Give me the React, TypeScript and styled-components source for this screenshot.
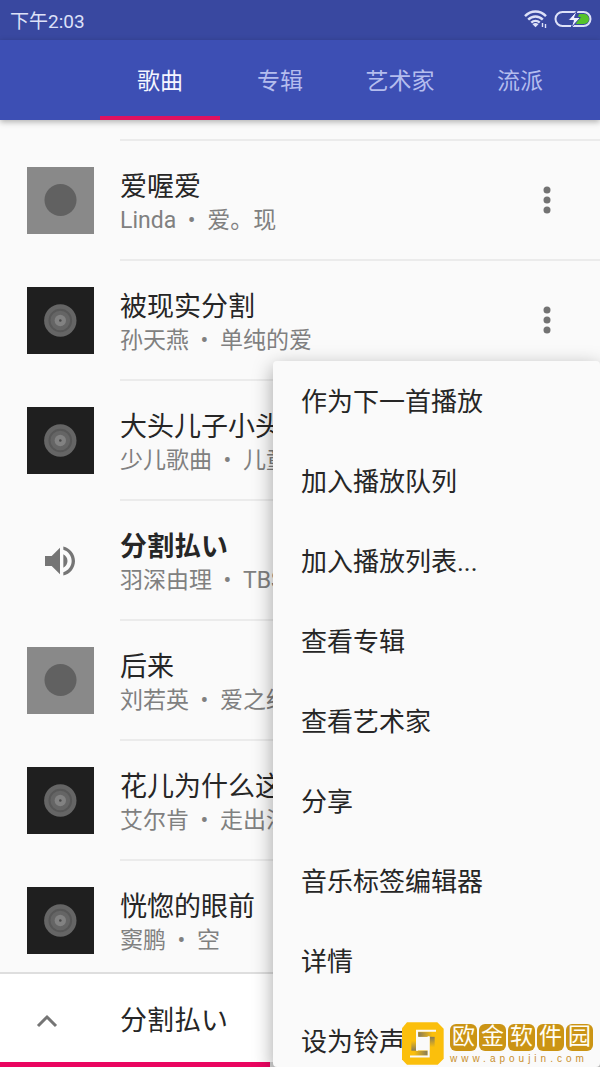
import React from "react";
import styled, { createGlobalStyle } from "styled-components";

const GlobalStyle = createGlobalStyle`
  * { box-sizing: border-box; }
  body {
    margin: 0;
    background: #fafafa;
    font-family: Roboto, "Noto Sans CJK SC", sans-serif;
    color: #262626;
  }
  button {
    font: inherit;
    color: inherit;
    background: none;
    border: 0;
    padding: 0;
    cursor: pointer;
  }
`;

const Screen = styled.div`
  position: relative;
  display: flex;
  flex-direction: column;
  height: 100vh;
  overflow: hidden;
`;

const StatusBar = styled.div`
  flex: none;
  display: flex;
  align-items: center;
  justify-content: space-between;
  height: 40px;
  padding: 0 8px 2px 10px;
  background: #3948a0;
  color: #dde1f8;
  font-size: 19px;
`;

const StatusIcons = styled.div`
  display: flex;
  align-items: center;
  gap: 6px;
`;

const Tabs = styled.nav`
  flex: none;
  position: relative;
  z-index: 1;
  display: flex;
  height: 80px;
  padding-left: 100px;
  background: #3d4fb4;
  box-shadow: 0 2px 6px rgba(0, 0, 0, 0.3);
`;

const Tab = styled.button<{ $active?: boolean }>`
  width: 120px;
  padding-top: 8px;
  font-size: 23px;
  line-height: 32px;
  color: ${(p) => (p.$active ? "#f4f5ff" : "#b4bdee")};
  border-bottom: 4px solid ${(p) => (p.$active ? "#e0115f" : "transparent")};
`;

const List = styled.ul`
  flex: 1;
  min-height: 0;
  margin: 0;
  padding: 19px 0 0;
  list-style: none;
  overflow: hidden;
`;

const Row = styled.li`
  display: flex;
  height: 120px;
`;

const Artwork = styled.div`
  flex: none;
  display: flex;
  align-items: center;
  justify-content: center;
  width: 120px;
  padding-top: 3px;
`;

const RowBody = styled.div`
  flex: 1;
  min-width: 0;
  display: flex;
  align-items: center;
  border-top: 2px solid #ebebeb;
`;

const SongText = styled.div`
  flex: 1;
  min-width: 0;
  padding-top: 6px;
  white-space: nowrap;
  overflow: hidden;
`;

const Title = styled.div<{ $playing?: boolean }>`
  font-size: 27px;
  line-height: 36px;
  font-weight: ${(p) => (p.$playing ? 700 : 400)};
`;

const Subtitle = styled.div`
  display: flex;
  font-size: 23px;
  line-height: 32px;
  color: #808080;
`;

const Dot = styled.span`
  width: 31px;
  text-align: center;
`;

const MoreButton = styled.button`
  display: flex;
  align-items: center;
  justify-content: center;
  width: 107px;
  height: 80px;
`;

const PlayerBar = styled.footer`
  flex: none;
  display: flex;
  flex-direction: column;
  height: 95px;
  background: #ffffff;
  border-top: 2px solid #dedede;
`;

const PlayerContent = styled.div`
  flex: 1;
  display: flex;
  align-items: center;
  padding-top: 6px;
`;

const ExpandButton = styled.button`
  display: flex;
  width: 120px;
  padding-left: 36px;
`;

const Track = styled.div`
  height: 5px;
  background: #d6d6d6;
`;

const Elapsed = styled.div`
  width: 45%;
  height: 100%;
  background: #ea0560;
`;

const Menu = styled.div`
  position: absolute;
  z-index: 2;
  top: 361px;
  right: 0;
  bottom: 0;
  width: 327px;
  overflow: hidden;
  border-radius: 4px;
  background: #fafafa;
  box-shadow: 0 6px 20px rgba(0, 0, 0, 0.36);
`;

const MenuItem = styled.button`
  display: block;
  width: 100%;
  height: 80px;
  padding: 2px 0 0 28px;
  font-size: 26px;
  line-height: 36px;
  text-align: left;
`;

const Watermark = styled.a`
  position: absolute;
  z-index: 3;
  right: 7px;
  bottom: 2px;
  display: flex;
  align-items: center;
  gap: 6px;
  text-decoration: none;
`;

const WatermarkText = styled.div`
  display: flex;
  flex-direction: column;
  gap: 2px;
`;

const Seals = styled.div`
  display: flex;
  gap: 2px;
`;

const Seal = styled.span`
  width: 27px;
  height: 27px;
  border-radius: 6px;
  background: #cb9414;
  color: #fffdf4;
  font-size: 23px;
  line-height: 26px;
  text-align: center;
`;

const Domain = styled.span`
  font-family: "Liberation Sans", sans-serif;
  font-size: 10px;
  line-height: 11px;
  letter-spacing: 4px;
  white-space: nowrap;
  color: #c98f2c;
`;

const WifiIcon = () => (
  <svg width="24" height="20" viewBox="0 0 24 20" fill="none" stroke="#dde1f8" strokeWidth="2.400">
    <path d="M1 7.200C7 1 16 1 22 7.200" />
    <path d="M4.200 10.600c4-4.200 10.600-4.200 14.600 0" />
    <path d="M7.300 13.700c2.400-2.400 6-2.400 8.400 0" />
    <path d="M11.500 18.200l-3-3c1.600-1.600 4.400-1.600 6 0z" fill="#dde1f8" stroke="none" />
    <path d="M18.500 14v4M21.500 15v4" strokeWidth="1.400" />
  </svg>
);

const BatteryIcon = () => (
  <svg width="38" height="18" viewBox="0 0 38 18">
    <rect x="1.500" y="2" width="35" height="14" rx="7" fill="none" stroke="#dde1f8" strokeWidth="2" />
    <path d="M25 4h5a5 5 0 0 1 0 10h-8z" fill="#55c22b" />
    <path d="M23.500 0L14 10.500h5.500L17 18l9.500-10.500h-6z" fill="#eef0ff" stroke="#3948a0" strokeWidth="1" />
  </svg>
);

const PlainDisc = () => (
  <svg width="67" height="67" viewBox="0 0 67 67">
    <rect width="67" height="67" fill="#898989" />
    <circle cx="33.500" cy="33" r="16" fill="#616161" />
  </svg>
);

const VinylDisc = () => (
  <svg width="67" height="67" viewBox="0 0 67 67">
    <rect width="67" height="67" fill="#1f1f1f" />
    <circle cx="33.300" cy="33.500" r="16.200" fill="#656565" />
    <circle cx="33.300" cy="33.500" r="10.800" fill="none" stroke="#575757" strokeWidth="2" />
    <circle cx="33.300" cy="33.500" r="5.700" fill="#828282" />
    <circle cx="33.300" cy="33.500" r="1.300" fill="#4a4a4a" />
  </svg>
);

const SpeakerIcon = () => (
  <svg width="40" height="40" viewBox="0 0 24 24" fill="#757575">
    <path d="M3 9v6h4l5 5V4L7 9H3zm13.500 3c0-1.770-1.020-3.290-2.500-4.030v8.050c1.480-.730 2.500-2.250 2.500-4.020zM14 3.230v2.060c2.890.860 5 3.540 5 6.710s-2.110 5.850-5 6.710v2.060c4.010-.910 7-4.490 7-8.770s-2.990-7.860-7-8.770z" />
  </svg>
);

const MoreIcon = () => (
  <svg width="8" height="28" viewBox="0 0 8 28" fill="#737373">
    <circle cx="4" cy="4" r="3.500" />
    <circle cx="4" cy="14" r="3.500" />
    <circle cx="4" cy="24" r="3.500" />
  </svg>
);

const ChevronUp = () => (
  <svg width="22" height="14" viewBox="0 0 22 14" fill="none" stroke="#757575" strokeWidth="3">
    <path d="M2 12l9-9 9 9" />
  </svg>
);

const SiteLogo = () => (
  <svg width="42" height="43" viewBox="0 0 126 128">
    <defs>
      <linearGradient id="fadeRight" x1="0" x2="1" y1="0" y2="0">
        <stop offset="0" stopColor="#857a5a" />
        <stop offset="0.8" stopColor="#fbbf0c" />
      </linearGradient>
      <linearGradient id="fadeLeft" x1="1" x2="0" y1="0" y2="0">
        <stop offset="0" stopColor="#857a5a" />
        <stop offset="0.8" stopColor="#fbbf0c" />
      </linearGradient>
      <linearGradient id="fadeDown" x1="0" x2="0" y1="0" y2="1">
        <stop offset="0" stopColor="#857a5a" />
        <stop offset="0.6" stopColor="#fbbf0c" />
      </linearGradient>
      <linearGradient id="fadeUp" x1="0" x2="0" y1="1" y2="0">
        <stop offset="0" stopColor="#857a5a" />
        <stop offset="0.6" stopColor="#fbbf0c" />
      </linearGradient>
    </defs>
    <path d="M15 0h91l19 20v90l-18 18H15L0 112V18z" fill="#fbbf0c" />
    <rect x="44" y="43" width="38" height="42" fill="#fafafa" />
    <rect x="28" y="36" width="14" height="50" fill="url(#fadeUp)" />
    <rect x="49" y="30" width="53" height="14" fill="url(#fadeRight)" />
    <rect x="84" y="44" width="14" height="52" fill="url(#fadeDown)" />
    <rect x="26" y="86" width="51" height="14" fill="url(#fadeLeft)" />
    <path
      d="M102 26H45V86M24 103h56V42"
      fill="none"
      stroke="#fafafa"
      strokeWidth="6"
    />
  </svg>
);

type Song = { title: string; artist: string; album: string; art: "plain" | "vinyl" | "playing" };

const songs: Song[] = [
  { title: "爱喔爱", artist: "Linda", album: "爱。现", art: "plain" },
  { title: "被现实分割", artist: "孙天燕", album: "单纯的爱", art: "vinyl" },
  { title: "大头儿子小头", artist: "少儿歌曲", album: "儿童", art: "vinyl" },
  { title: "分割払い", artist: "羽深由理", album: "TBS", art: "playing" },
  { title: "后来", artist: "刘若英", album: "爱之经", art: "plain" },
  { title: "花儿为什么这", artist: "艾尔肯", album: "走出沙", art: "vinyl" },
  { title: "恍惚的眼前", artist: "窦鹏", album: "空", art: "vinyl" },
];

const artwork = { plain: <PlainDisc />, vinyl: <VinylDisc />, playing: <SpeakerIcon /> };

const tabs = ["歌曲", "专辑", "艺术家", "流派"];

const menuItems = [
  "作为下一首播放",
  "加入播放队列",
  "加入播放列表...",
  "查看专辑",
  "查看艺术家",
  "分享",
  "音乐标签编辑器",
  "详情",
  "设为铃声",
];

export default function App() {
  return (
    <Screen>
      <GlobalStyle />
      <StatusBar>
        <span>下午2:03</span>
        <StatusIcons>
          <WifiIcon />
          <BatteryIcon />
        </StatusIcons>
      </StatusBar>
      <Tabs>
        {tabs.map((name, i) => (
          <Tab key={name} $active={i === 0}>{name}</Tab>
        ))}
      </Tabs>
      <List>
        {songs.map((song) => (
          <Row key={song.title}>
            <Artwork>{artwork[song.art]}</Artwork>
            <RowBody>
              <SongText>
                <Title $playing={song.art === "playing"}>{song.title}</Title>
                <Subtitle>
                  {song.artist}
                  <Dot>•</Dot>
                  {song.album}
                </Subtitle>
              </SongText>
              <MoreButton aria-label="更多">
                <MoreIcon />
              </MoreButton>
            </RowBody>
          </Row>
        ))}
      </List>
      <PlayerBar>
        <PlayerContent>
          <ExpandButton aria-label="展开">
            <ChevronUp />
          </ExpandButton>
          <Title>分割払い</Title>
        </PlayerContent>
        <Track>
          <Elapsed />
        </Track>
      </PlayerBar>
      <Menu role="menu">
        {menuItems.map((item) => (
          <MenuItem key={item} role="menuitem">{item}</MenuItem>
        ))}
      </Menu>
      <Watermark href="#">
        <SiteLogo />
        <WatermarkText>
          <Seals>
            {[..."欧金软件园"].map((char) => (
              <Seal key={char}>{char}</Seal>
            ))}
          </Seals>
          <Domain>www.apoujin.com</Domain>
        </WatermarkText>
      </Watermark>
    </Screen>
  );
}
